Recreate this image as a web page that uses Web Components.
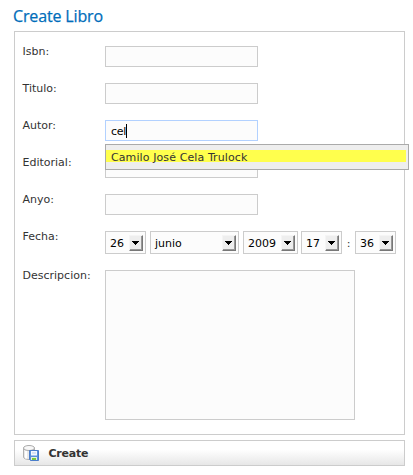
<!DOCTYPE html>
<html lang="es">
<head>
<meta charset="utf-8">
<title>Create Libro</title>
<style>
body{margin:0;background:#fff;color:#333;font:11px/14px "DejaVu Sans",Verdana,sans-serif}
</style>
</head>
<body>
<libro-page></libro-page>
<script>
const define = (name, html, setup) => customElements.define(name, class extends HTMLElement {
  constructor() {
    super();
    const t = document.createElement('template');
    t.innerHTML = html;
    this.attachShadow({mode: 'open'}).append(t.content.cloneNode(true));
  }
  connectedCallback() { if (setup) setup(this, this.shadowRoot); }
});

define('form-row', `
<style>
:host{display:grid;grid-template-columns:82.5px 1fr;align-items:start}
label{white-space:nowrap;margin-top:-1px}
</style>
<label></label><slot></slot>`,
(el, root) => { root.querySelector('label').textContent = el.getAttribute('label'); });

define('text-field', `
<style>
:host{display:block;box-sizing:border-box;width:153px;height:21px;border:1px solid #ccc;background:#fcfcfc;color:#000;position:relative}
:host([focused]){border-color:#b2d1ff}
:host([multiline]){width:250px;height:150px}
.line{display:flex;align-items:center;height:19px;padding-left:5px}
.line span{letter-spacing:-.3px;padding-top:2px}
.caret{display:none;width:1px;height:14px;background:#000}
:host([focused]) .caret{display:block}
</style>
<div class="line"><span></span><i class="caret"></i></div><slot></slot>`,
(el, root) => { root.querySelector('span').textContent = el.getAttribute('value') || ''; });

define('suggestion-list', `
<style>
:host{position:absolute;z-index:2;left:-1px;top:23px;box-sizing:border-box;width:304px;height:26px;border:1px solid #aaa;background:#eee;padding:5px 2px 0 0;color:#333}
div{height:12px;line-height:15px;background:#ffff4d;padding-left:5px;white-space:nowrap;letter-spacing:.1px}
</style>
<div><slot></slot></div>`);

define('select-box', `
<style>
:host{display:flex;box-sizing:border-box;height:23px;width:41px;border:1px solid #ccc;background:#fcfcfc;color:#000;align-items:center;justify-content:space-between;padding:0 2px 0 4px}
.text{padding-top:2px}
.arrow{box-sizing:border-box;width:14px;height:16px;background:#eee;border-right:1px solid #777;border-bottom:1px solid #777;border-top:1px solid #f5f5f5;border-left:1px solid #f5f5f5;box-shadow:inset -1px -1px #999}
svg{display:block}
</style>
<span class="text"><slot></slot></span><div class="arrow"><svg width="12" height="13"><path d="M2 5h7v1h-1v1h-1v1h-1v1h-1v-1h-1v-1h-1v-1h-1z" fill="#000"/></svg></div>`);

define('save-icon', `
<style>:host{display:block;width:17px;height:17px}svg{display:block}</style>
<svg width="17" height="17" viewBox="0 0 17 17">
<path d="M.5 3v9c0 1.400 2.400 2.500 5.500 2.500S11.500 13.400 11.500 12V3z" fill="#e9e9e9" stroke="#b0b0b0"/>
<path d="M3 6v7.500" stroke="#fff" stroke-width="2"/>
<ellipse cx="6" cy="3" rx="5.500" ry="2.500" fill="#f8f8f8" stroke="#aaa"/>
<path d="M6.500 5.500h9v10h-8l-1-1z" fill="#5b92dc" stroke="#4a7dca"/>
<path d="M8 6h6v4.500H8z" fill="#f4f8ff"/><path d="M9 8h4" stroke="#b9cdeb"/>
<path d="M8 12h6v3H8z" fill="#e5f2d9"/><path d="M9 13h4v2H9z" fill="#76c83e"/>
</svg>`);

define('action-bar', `
<style>
:host{display:flex;box-sizing:border-box;height:26px;margin-top:5px;border:1px solid #ccc;background:linear-gradient(#fff 0,#fff 35%,#e7e7e7 100%);align-items:center;padding-left:8px;gap:8.500px;font-weight:bold;font-size:11px}
span{letter-spacing:-.7px;padding-top:2px;letter-spacing:-.25px}
</style>
<save-icon></save-icon><span><slot></slot></span>`);

define('libro-page', `
<style>
:host{display:block;box-sizing:border-box;width:405px;height:475px;padding:6px 0 0 14px}
h1{margin:0 0 0 -1px;height:25px;font:500 16px/20px "Open Sans","Noto Sans",sans-serif;color:#006dba;letter-spacing:-.15px;white-space:nowrap;-webkit-text-stroke:.25px #006dba}
form{display:flex;flex-direction:column;gap:16px;box-sizing:border-box;height:404px;border:1px solid #ccc;padding:14px 0 0 7.500px}
.date{display:flex;align-items:center}
.month{width:89px;margin:0 4px}
.year{width:55px;margin-right:3px}
.sep{width:13px;text-align:center;padding-top:2px}
</style>
<h1>Create Libro</h1>
<form>
<form-row label="Isbn:"><text-field></text-field></form-row>
<form-row label="Titulo:"><text-field></text-field></form-row>
<form-row label="Autor:"><text-field focused value="cel"><suggestion-list>Camilo José Cela Trulock</suggestion-list></text-field></form-row>
<form-row label="Editorial:"><text-field></text-field></form-row>
<form-row label="Anyo:"><text-field></text-field></form-row>
<form-row label="Fecha:"><div class="date"><select-box>26</select-box><select-box class="month">junio</select-box><select-box class="year">2009</select-box><select-box>17</select-box><span class="sep">:</span><select-box>36</select-box></div></form-row>
<form-row label="Descripcion:"><text-field multiline></text-field></form-row>
</form>
<action-bar>Create</action-bar>`);
</script>
</body>
</html>
